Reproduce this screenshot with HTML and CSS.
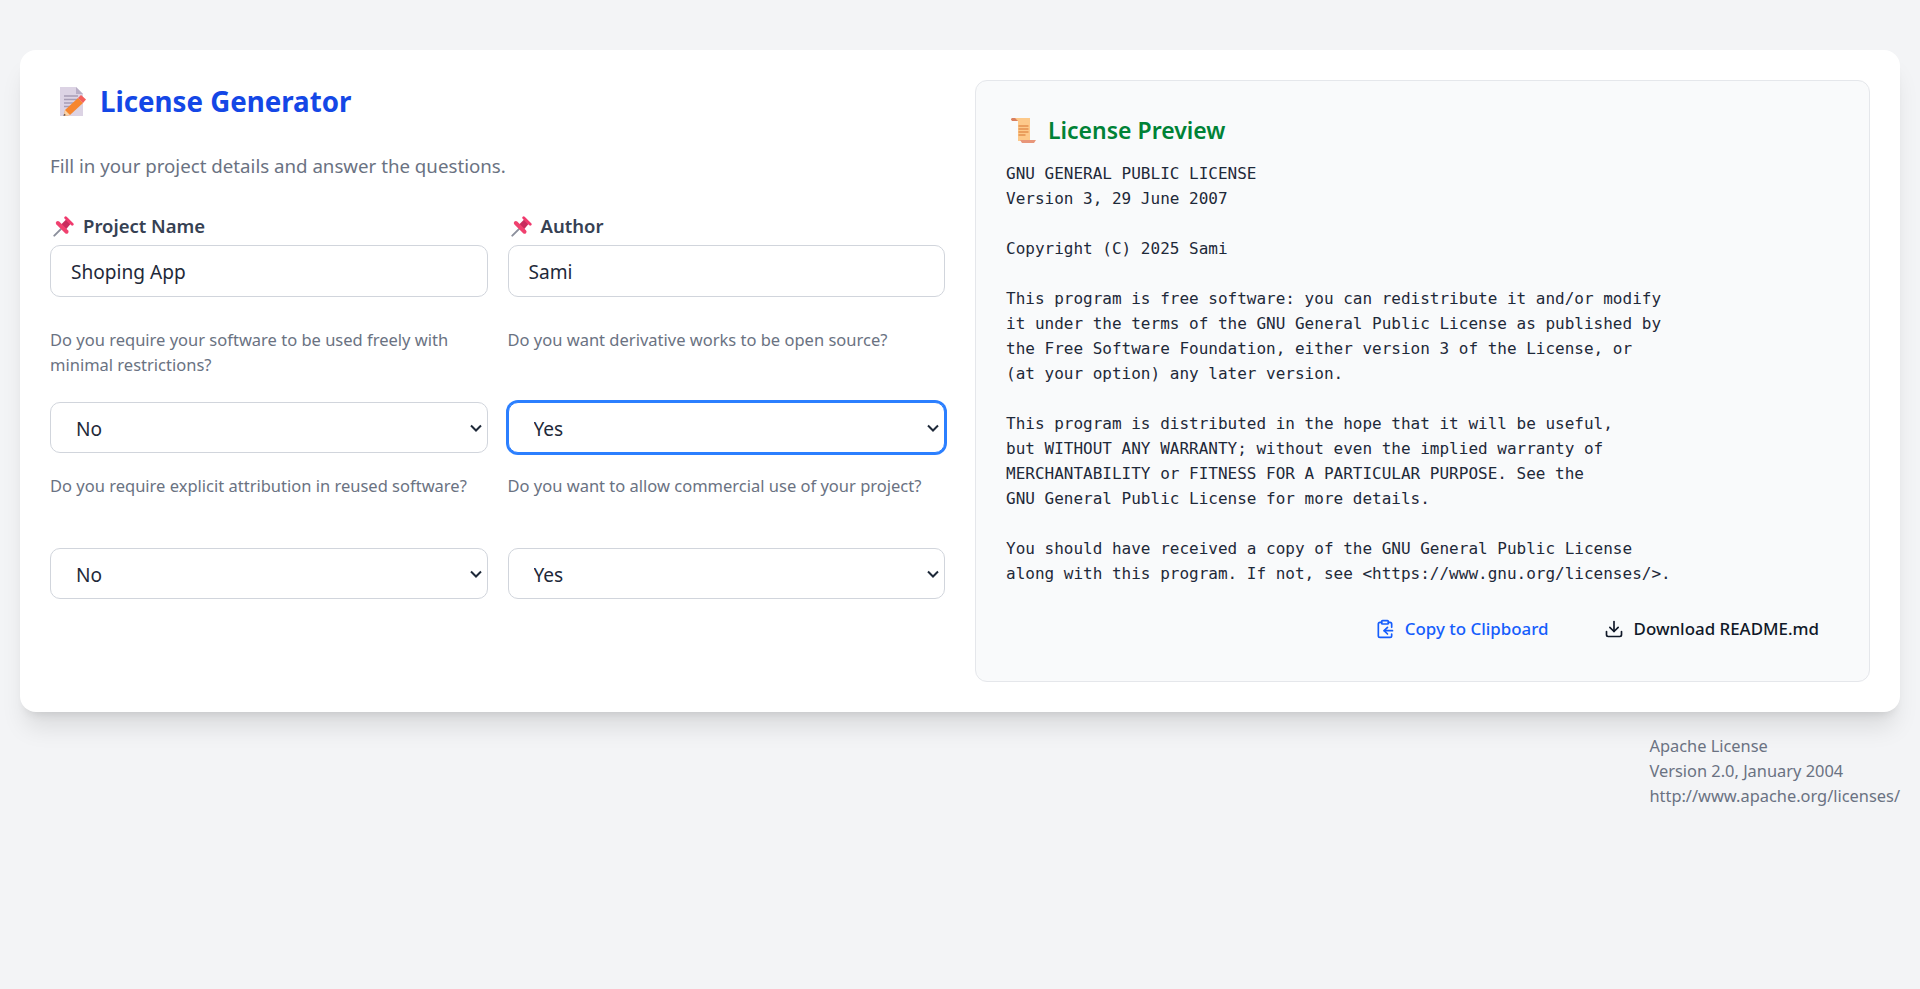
FILE: index.html
```html
<!DOCTYPE html>
<html lang="en">
<head>
	<meta charset="UTF-8">
	<title>License Generator</title>
	<meta name="viewport" content="width=device-width, initial-scale=1.0">
	<link rel="stylesheet" href="styles.css">
</head>
<body>
	<main class="card">
		<section class="form-panel">
			<h1 class="title">
				<svg class="emoji emoji-memo" viewBox="0 0 28 29"><path d="M2 0h16l7 7v22H2z" fill="#dcd3e4"/><path d="M18 0l7 7h-7z" fill="#b8aec6"/><path d="M6 9h14M6 12.5h14M6 16h12M6 19.5h8" stroke="#a79db5" stroke-width="1.3"/><path d="M7 23L20 11l5 5-13 12-6 1z" fill="#f7862f"/><path d="M7 23l5 5-6 1z" fill="#f9d3a8"/><path d="M6 27l2 1-2.500 1z" fill="#4a3a3a"/><path d="M20 11l3-3 5 4.500-3 3.500z" fill="#f4605c"/></svg>
				License Generator
			</h1>
			<p class="intro">Fill in your project details and answer the questions.</p>

			<div class="fields">
				<div class="field">
					<label for="project">
						<svg class="emoji emoji-pin" viewBox="0 0 24 24"><path d="M1.500 22.500L9 15" stroke="#8b8f9c" stroke-width="2.200" stroke-linecap="round"/><path d="M15 4l5 5-5 6-6-5z" fill="#c92c5e"/><path d="M14.500 2L22 9.500" stroke="#f0396d" stroke-width="3.200" stroke-linecap="round"/><path d="M5.500 8l10 10" stroke="#f0416f" stroke-width="4.500" stroke-linecap="round"/></svg>
						Project Name
					</label>
					<input type="text" id="project" value="Shoping App">
				</div>
				<div class="field">
					<label for="author">
						<svg class="emoji emoji-pin" viewBox="0 0 24 24"><path d="M1.500 22.500L9 15" stroke="#8b8f9c" stroke-width="2.200" stroke-linecap="round"/><path d="M15 4l5 5-5 6-6-5z" fill="#c92c5e"/><path d="M14.500 2L22 9.500" stroke="#f0396d" stroke-width="3.200" stroke-linecap="round"/><path d="M5.500 8l10 10" stroke="#f0416f" stroke-width="4.500" stroke-linecap="round"/></svg>
						Author
					</label>
					<input type="text" id="author" value="Sami">
				</div>

				<div class="question">
					<p>Do you require your software to be used freely with minimal restrictions?</p>
					<select><option>No</option><option>Yes</option></select>
				</div>
				<div class="question">
					<p>Do you want derivative works to be open source?</p>
					<select class="focused"><option>Yes</option><option>No</option></select>
				</div>
				<div class="question">
					<p>Do you require explicit attribution in reused software?</p>
					<select><option>No</option><option>Yes</option></select>
				</div>
				<div class="question">
					<p>Do you want to allow commercial use of your project?</p>
					<select><option>Yes</option><option>No</option></select>
				</div>
			</div>
		</section>

		<section class="preview">
			<h2 class="preview-title">
				<svg class="emoji emoji-scroll" viewBox="0 0 25 26"><path d="M0 2.500C0 1 1 1 2 1h5v3H1z" fill="#d9805f"/><path d="M4 1h15v23H7V4z" fill="#fdc98a"/><path d="M7.500 9h10M7.500 12h10M7.500 15h10M7.500 18h7" stroke="#e3904f" stroke-width="1.300"/><path d="M9 23h16l-2 3H11z" fill="#e8967a"/></svg>
				License Preview
			</h2>
			<pre class="license">GNU GENERAL PUBLIC LICENSE
Version 3, 29 June 2007

Copyright (C) 2025 Sami

This program is free software: you can redistribute it and/or modify
it under the terms of the GNU General Public License as published by
the Free Software Foundation, either version 3 of the License, or
(at your option) any later version.

This program is distributed in the hope that it will be useful,
but WITHOUT ANY WARRANTY; without even the implied warranty of
MERCHANTABILITY or FITNESS FOR A PARTICULAR PURPOSE. See the
GNU General Public License for more details.

You should have received a copy of the GNU General Public License
along with this program. If not, see &lt;https://www.gnu.org/licenses/&gt;.</pre>
			<div class="actions">
				<button class="btn btn-copy" type="button">
					<svg viewBox="0 0 24 24" fill="none" stroke="currentColor" stroke-width="2" stroke-linecap="round" stroke-linejoin="round"><rect x="8" y="2" width="8" height="4" rx="1"/><path d="M8 4H6a2 2 0 0 0-2 2v14a2 2 0 0 0 2 2h12a2 2 0 0 0 2-2v-2"/><path d="M16 4h2a2 2 0 0 1 2 2v4"/><path d="M21 14H11"/><path d="m15 10-4 4 4 4"/></svg>
					Copy to Clipboard
				</button>
				<button class="btn btn-download" type="button">
					<svg viewBox="0 0 24 24" fill="none" stroke="currentColor" stroke-width="2" stroke-linecap="round" stroke-linejoin="round"><path d="M21 15v4a2 2 0 0 1-2 2H5a2 2 0 0 1-2-2v-4"/><path d="M7 10l5 5 5-5"/><path d="M12 15V3"/></svg>
					Download README.md
				</button>
			</div>
		</section>
	</main>

	<footer class="notice">
		Apache License<br>
		Version 2.0, January 2004<br>
		http://www.apache.org/licenses/
	</footer>
</body>
</html>
```

FILE: styles.css
```css
* {
	box-sizing: border-box;
}

body {
	font-family: "Noto Sans", sans-serif;
	margin: 0;
	padding: 50px 20px 0;
	min-height: 100vh;
	background-color: #f3f4f6;
	color: #1e2939;
}

.card {
	display: grid;
	grid-template-columns: 1fr 1fr;
	gap: 30px;
	padding: 30px;
	height: 662px;
	background-color: #fff;
	border-radius: 16px;
	box-shadow: 0 20px 25px -5px rgba(0, 0, 0, 0.1), 0 8px 10px -6px rgba(0, 0, 0, 0.1);
}

.emoji {
	display: inline-block;
	flex: none;
}

.title {
	display: flex;
	align-items: center;
	gap: 14px;
	height: 42px;
	margin: 0 0 0 8px;
	font-size: 27.7px;
	font-weight: 700;
	color: #1447e6;
}

.emoji-memo {
	width: 28px;
	height: 29px;
}

.intro {
	margin: 30px 0 32px;
	font-size: 18.7px;
	line-height: 28px;
	color: #6a7282;
}

.fields {
	display: grid;
	grid-template-columns: 1fr 1fr;
	column-gap: 20px;
}

.field label {
	display: flex;
	align-items: center;
	gap: 9px;
	margin: 0 0 5px 3px;
	font-size: 18.5px;
	line-height: 28px;
	font-weight: 600;
	color: #364153;
}

.emoji-pin {
	width: 21px;
	height: 21px;
}

input,
select {
	display: block;
	width: 100%;
	border: 1px solid #d1d5dc;
	border-radius: 10px;
	background-color: #fff;
	font-family: inherit;
	font-size: 19.1px;
	color: #1e2939;
}

input {
	height: 52px;
	padding: 2px 20px 0;
}

select {
	height: 51px;
	padding: 2px 25px 0;
	appearance: none;
	background-image: url("data:image/svg+xml,%3Csvg xmlns='http://www.w3.org/2000/svg' viewBox='0 0 12 8'%3E%3Cpath d='M1 1.500l5 5 5-5' fill='none' stroke='%231e2939' stroke-width='2'/%3E%3C/svg%3E");
	background-repeat: no-repeat;
	background-position: right 5px center;
	background-size: 12px 8px;
}

.focused {
	border-color: #2b7fff;
	box-shadow: 0 0 0 2px #2b7fff;
	outline: none;
}

.question p {
	height: 105px;
	margin: 0;
	padding-top: 30px;
	font-size: 16.5px;
	line-height: 25px;
	color: #6a7282;
}

.question:nth-child(n+5) p {
	height: 95px;
	padding-top: 20px;
}

.preview {
	display: flex;
	flex-direction: column;
	padding: 33px 30px 30px;
	background-color: #f9fafb;
	border: 1px solid #e5e7eb;
	border-radius: 12px;
}

.preview-title {
	display: flex;
	align-items: center;
	gap: 12px;
	margin: 0 0 15px;
	padding-left: 5px;
	font-size: 23px;
	line-height: 32px;
	font-weight: 600;
	color: #008236;
}

.emoji-scroll {
	width: 25px;
	height: 26px;
}

.license {
	margin: 0;
	font-family: "DejaVu Sans Mono", monospace;
	font-size: 16px;
	line-height: 25px;
	color: #1e2939;
}

.actions {
	display: flex;
	justify-content: flex-end;
	gap: 39px;
	margin-top: 23px;
	padding-right: 12px;
}

.btn {
	display: inline-flex;
	align-items: center;
	gap: 10px;
	padding: 8px;
	border: none;
	background: none;
	font-family: inherit;
	font-size: 16.9px;
	line-height: 24px;
	font-weight: 500;
}

.btn svg {
	width: 20px;
	height: 20px;
}

.btn-copy {
	color: #155dfc;
}

.btn-download {
	color: #101828;
}

.notice {
	width: fit-content;
	margin: 21px 0 0 auto;
	font-size: 16.4px;
	line-height: 25px;
	color: #6a7282;
}
```
